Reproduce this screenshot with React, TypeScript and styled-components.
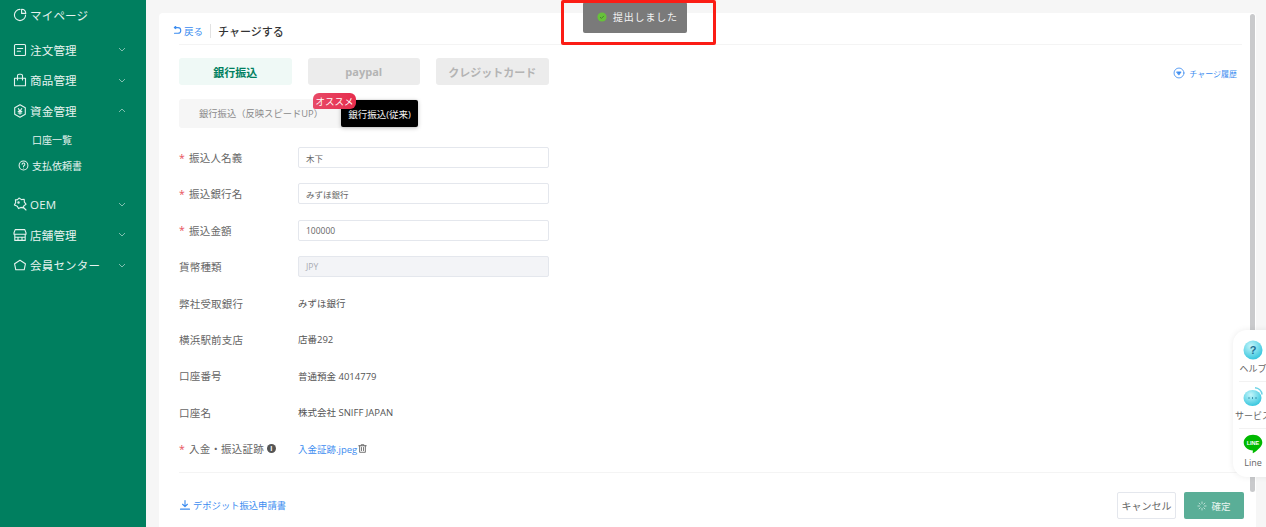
import { ReactNode } from 'react'
import styled, { createGlobalStyle } from 'styled-components'

const GREEN = '#007f5f'
const BLUE = '#3b8cf0'

const Global = createGlobalStyle`
    html, body {
        margin: 0;
        padding: 0;
        height: 527px;
        overflow: hidden;
        background: #f6f6f6;
        font-family: "Open Sans", "Noto Sans CJK JP", sans-serif;
    }
    * { box-sizing: border-box; }
`

const Ico = ({ children, size = 16 }: { children: ReactNode; size?: number }) => (
    <svg width={size} height={size} viewBox="0 0 16 16" fill="none" stroke="currentColor" strokeWidth="1.1" strokeLinecap="round" strokeLinejoin="round">
        {children}
    </svg>
)

const Chevron = ({ up }: { up?: boolean }) => (
    <ChevronBox viewBox="0 0 8 5" fill="none" stroke="currentColor" strokeWidth="0.8">
        <path d={up ? 'M1 4l3-3 3 3' : 'M1 1l3 3 3-3'} />
    </ChevronBox>
)

const menuIcons: Record<string, ReactNode> = {
    mypage: <><path d="M8 2.400a5.600 5.600 0 1 0 5.600 5.600" /><path d="M9.600 2.200v4.200h4.200a4.400 4.400 0 0 0-4.200-4.200z" /></>,
    order: <><rect x="2.500" y="2.500" width="11" height="11" rx="1" /><path d="M5.300 6.500h5.400M5.300 9.300h3.200" /></>,
    goods: <><path d="M2.500 6.200h11v7.600h-11z" /><path d="M5.500 8V3.800a1.600 1.600 0 0 1 1.600-1.600h1.800a1.600 1.600 0 0 1 1.600 1.600V8" /></>,
    funds: <><path d="M8 1.800l5.300 3v6.400L8 14.200l-5.300-3V4.800z" /><path d="M6.300 5.600L8 8l1.700-2.400M6.200 8.400h3.600M6.200 10h3.600M8 8v3.200" /></>,
    oem: <><path d="M7 2l2.500 1.600 2.700-.3.200 2.900 1.600 2-2.200 1.700-.4 2-2.600-.5-2.300 1.200-1.200-2.400L2.400 9l1.300-2.400-.3-2.700 2.200-.3z" /><path d="M11 11l3 3" /><circle cx="6.500" cy="6.500" r="0.700" /></>,
    store: <><path d="M3.200 2.600h9.600l1.200 3.200v1.400H2V5.800z" /><path d="M2.800 7.200v6.200h10.400V7.200M2.800 10.200h10.400M6 10.200v3.200M10 10.200v3.200" /></>,
    member: <path d="M2.600 6.800L8 3.200l5.400 3.600-1.200 6H3.800z" />,
}

const MenuRow = ({ icon, label, open, noArrow }: { icon: string; label: string; open?: boolean; noArrow?: boolean }) => (
    <MenuItem>
        <Ico>{menuIcons[icon]}</Ico>
        <MenuLabel>{label}</MenuLabel>
        {!noArrow && <Chevron up={open} />}
    </MenuItem>
)

const fields = [
    { label: '振込人名義', required: true, value: '木下' },
    { label: '振込銀行名', required: true, value: 'みずほ銀行' },
    { label: '振込金額', required: true, value: '100000' },
]

const infos = [
    { label: '弊社受取銀行', value: 'みずほ銀行' },
    { label: '横浜駅前支店', value: '店番292' },
    { label: '口座番号', value: '普通預金 4014779' },
    { label: '口座名', value: '株式会社 SNIFF JAPAN' },
]

const App = () => {
    return (
        <Page>
            <Global />
            <Sidebar>
                <TopItem><MenuRow icon="mypage" label="マイページ" noArrow /></TopItem>
                <MenuRow icon="order" label="注文管理" />
                <MenuRow icon="goods" label="商品管理" />
                <MenuRow icon="funds" label="資金管理" open />
                <SubItem>口座一覧</SubItem>
                <SubItem $withIcon>
                    <Ico size={11}><circle cx="8" cy="8" r="6.400" strokeWidth="1.500" /><path d="M6 6.300a2 2 0 1 1 3 1.700c-.7.400-1 .8-1 1.500M8 11.500v.1" strokeWidth="1.500" /></Ico>
                    支払依頼書
                </SubItem>
                <Spacer />
                <MenuRow icon="oem" label="OEM" />
                <MenuRow icon="store" label="店舗管理" />
                <MenuRow icon="member" label="会員センター" />
            </Sidebar>
            <Main>
                <Card>
                    <Header>
                        <BackLink>
                            <Ico size={10}><path d="M4 2.500h5.500a4 4 0 0 1 0 9H4" strokeWidth="1.800" /><path d="M6 .8L3.800 2.500 6 4.300" strokeWidth="1.800" /></Ico>
                            戻る
                        </BackLink>
                        <HeaderTitle>チャージする</HeaderTitle>
                    </Header>
                    <TabsRow>
                        <PayTab $active>銀行振込</PayTab>
                        <PayTab>paypal</PayTab>
                        <PayTab>クレジットカード</PayTab>
                        <History>
                            <Ico size={12}><circle cx="8" cy="8" r="6.600" /><path d="M5.200 6.600h5.600L8 10.400z" fill="currentColor" /></Ico>
                            チャージ履歴
                        </History>
                    </TabsRow>
                    <SubTabs>
                        <SubTab>銀行振込（反映スピードUP）</SubTab>
                        <SubTabDark>銀行振込(従来)</SubTabDark>
                        <Badge>オススメ</Badge>
                    </SubTabs>
                    <Form>
                        {fields.map((f) => (
                            <Row key={f.label}>
                                <Label><Star>*</Star>{f.label}</Label>
                                <Input>{f.value}</Input>
                            </Row>
                        ))}
                        <Row>
                            <Label>貨幣種類</Label>
                            <Input $disabled>JPY</Input>
                        </Row>
                        {infos.map((f) => (
                            <Row key={f.label}>
                                <Label>{f.label}</Label>
                                <Value>{f.value}</Value>
                            </Row>
                        ))}
                        <Row>
                            <Label>
                                <Star>*</Star>入金・振込証跡
                                <InfoDot>i</InfoDot>
                            </Label>
                            <FileLink>入金証跡.jpeg</FileLink>
                            <TrashBox>
                                <Ico size={11}><path d="M2.500 4h11M6 4V2.500h4V4M3.800 4v9.500h8.400V4M6.500 6.500v4.500M9.500 6.500v4.500" strokeWidth="1.300" /></Ico>
                            </TrashBox>
                        </Row>
                    </Form>
                    <Footer>
                        <Download>
                            <Ico size={12}><path d="M8 2v8M4.800 7L8 10.200 11.200 7M2 13.500h12" strokeWidth="1.500" /></Ico>
                            デポジット振込申請書
                        </Download>
                        <FooterButtons>
                            <CancelButton>キャンセル</CancelButton>
                            <ConfirmButton>
                                <Ico size={10}><path d="M8 1.500v2.500M8 12v2.500M1.500 8H4M12 8h2.500M3.400 3.400l1.800 1.800M10.800 10.800l1.800 1.800M3.400 12.600l1.800-1.800M10.800 5.200l1.800-1.800" /></Ico>
                                確定
                            </ConfirmButton>
                        </FooterButtons>
                    </Footer>
                </Card>
                <Scrollbar />
            </Main>
            <Toast>
                <ToastCheck viewBox="0 0 12 12">
                    <circle cx="6" cy="6" r="5.500" fill="#67c23a" />
                    <path d="M3.600 6.100l1.700 1.600 3-3" fill="none" stroke="#3d7a2a" strokeWidth="1" />
                </ToastCheck>
                提出しました
            </Toast>
            <Highlight />
            <Floating>
                <FloatItem>
                    <svg width="20" height="20" viewBox="0 0 20 20">
                        <defs>
                            <radialGradient id="bubble" cx="40%" cy="30%" r="75%">
                                <stop offset="0" stopColor="#c5f6fb" />
                                <stop offset="1" stopColor="#2fc3dc" />
                            </radialGradient>
                        </defs>
                        <circle cx="10" cy="10" r="9.500" fill="url(#bubble)" />
                        <text x="10" y="14" textAnchor="middle" fontSize="11" fontWeight="700" fill="#1f6f92" fontFamily="Liberation Sans">?</text>
                    </svg>
                    <FloatLabel>ヘルプ</FloatLabel>
                </FloatItem>
                <FloatItem>
                    <svg width="20" height="20" viewBox="0 0 20 20">
                        <path d="M12 .8a7.500 7.500 0 0 1 7 6.700" fill="none" stroke="#6fd4e6" strokeWidth="1.600" />
                        <ellipse cx="9.500" cy="11" rx="9" ry="8" fill="url(#bubble)" />
                        <path d="M5.500 11h1M9 11h1M12.500 11h1" stroke="#1f7f9f" strokeWidth="1.500" />
                    </svg>
                    <FloatLabel>サービス</FloatLabel>
                </FloatItem>
                <FloatItem $last>
                    <svg width="20" height="20" viewBox="0 0 20 20">
                        <path d="M10 .8c5.200 0 9.300 3.400 9.300 7.700 0 3.700-4.400 7.500-9 10.600-.3.200-.7 0-.6-.4l.2-2.200C4.700 16.200.7 12.800.7 8.500.7 4.200 4.800.8 10 .8z" fill="#00b900" />
                        <text x="10" y="11" textAnchor="middle" fontSize="5.500" fontWeight="700" fill="#fff" fontFamily="Liberation Sans">LINE</text>
                    </svg>
                    <FloatLabel>Line</FloatLabel>
                </FloatItem>
            </Floating>
        </Page>
    )
}

const Page = styled.div`
    position: relative;
    display: flex;
    width: 1266px;
    height: 527px;
    overflow: hidden;
`
const Sidebar = styled.aside`
    flex: 0 0 146px;
    display: flex;
    flex-direction: column;
    background: ${GREEN};
    color: #e6f3ef;
    padding-left: 12px;
`
const TopItem = styled.div`
    margin-bottom: 4px;
`
const MenuItem = styled.div`
    display: flex;
    align-items: center;
    gap: 2px;
    height: 30.500px;
    padding-right: 20px;
`
const MenuLabel = styled.span`
    flex: 1;
    font-size: 11.500px;
    letter-spacing: 0.2px;
`
const ChevronBox = styled.svg`
    width: 8px;
    height: 5px;
    opacity: 0.7;
`
const SubItem = styled.div<{ $withIcon?: boolean }>`
    display: flex;
    align-items: center;
    gap: 3px;
    height: 26px;
    padding-left: ${(p) => (p.$withIcon ? '6px' : '20px')};
    font-size: 10px;
`
const Spacer = styled.div`
    height: 11px;
`
const Main = styled.main`
    position: relative;
    flex: 1;
    padding: 13px 10px 0 13px;
`
const Card = styled.section`
    height: 530px;
    background: #fff;
    border-radius: 4px;
    padding: 0 19px 0 20px;
`
const Header = styled.header`
    display: flex;
    align-items: center;
    height: 32px;
    padding-top: 4px;
    margin-right: -5px;
    border-bottom: 1px solid #f4f4f4;
`
const BackLink = styled.span`
    display: flex;
    align-items: center;
    gap: 2px;
    padding-right: 7px;
    margin-left: -7px;
    font-size: 9.500px;
    color: ${BLUE};
    border-right: 1px solid #e2e2e2;
    height: 14px;
`
const HeaderTitle = styled.span`
    margin-left: 7px;
    font-size: 11px;
    font-weight: 500;
    color: #333;
`
const TabsRow = styled.div`
    position: relative;
    display: flex;
    gap: 16px;
    margin-top: 13px;
`
const PayTab = styled.div<{ $active?: boolean }>`
    display: flex;
    align-items: center;
    justify-content: center;
    width: 112.500px;
    height: 27px;
    border-radius: 3px;
    font-size: 11px;
    font-weight: 700;
    background: ${(p) => (p.$active ? '#eff9f6' : '#ececec')};
    color: ${(p) => (p.$active ? GREEN : '#b4b4b4')};
`
const History = styled.span`
    position: absolute;
    right: 0;
    top: 9px;
    display: flex;
    align-items: center;
    gap: 4px;
    font-size: 8px;
    color: ${BLUE};
`
const SubTabs = styled.div`
    position: relative;
    display: flex;
    align-items: center;
    width: 239px;
    height: 29px;
    margin-top: 14px;
    border-radius: 3px;
    background: #f6f6f6;
`
const SubTab = styled.span`
    padding-left: 20px;
    width: 162px;
    margin-top: -2px;
    font-size: 9.300px;
    color: #8a8a8a;
    white-space: nowrap;
`
const SubTabDark = styled.span`
    display: flex;
    align-items: center;
    justify-content: center;
    width: 77px;
    height: 27px;
    border-radius: 2px;
    background: #000;
    color: #f2f2f2;
    font-size: 9.500px;
    box-shadow: 0 1px 4px rgba(0, 0, 0, 0.25);
    white-space: nowrap;
`
const Badge = styled.span`
    position: absolute;
    left: 134px;
    top: -6px;
    display: flex;
    align-items: center;
    justify-content: center;
    width: 43px;
    height: 16px;
    border-radius: 6px 6px 6px 2px;
    background: linear-gradient(90deg, #e84a67, #e62d4d);
    color: #fff;
    font-size: 9.500px;
`
const Form = styled.div`
    display: flex;
    flex-direction: column;
    gap: 5.400px;
    margin-top: 14px;
    padding-bottom: 8px;
    margin-right: -5px;
    border-bottom: 1px solid #f4f4f4;
`
const Row = styled.div`
    display: flex;
    align-items: center;
    height: 31px;
`
const Label = styled.div`
    display: flex;
    align-items: center;
    flex: 0 0 119px;
    font-size: 10.500px;
    color: #666;
    letter-spacing: 0.2px;
`
const Star = styled.span`
    color: #e8505b;
    margin-right: 4px;
`
const InfoDot = styled.span`
    display: inline-flex;
    align-items: center;
    justify-content: center;
    width: 9px;
    height: 9px;
    margin-left: 3px;
    border-radius: 50%;
    background: #555;
    color: #fff;
    font-size: 7px;
    font-weight: 700;
`
const Input = styled.div<{ $disabled?: boolean }>`
    display: flex;
    align-items: center;
    width: 251px;
    height: 21px;
    padding-left: 7px;
    border: 1px solid #e4e7ed;
    border-radius: 2px;
    font-size: 8.500px;
    color: ${(p) => (p.$disabled ? '#a8abb2' : '#666')};
    background: ${(p) => (p.$disabled ? '#f3f4f7' : '#fff')};
`
const Value = styled.div`
    font-size: 9.500px;
    color: #555;
`
const FileLink = styled.span`
    font-size: 9.500px;
    color: ${BLUE};
`
const TrashBox = styled.span`
    display: flex;
    color: #666;
`
const Footer = styled.footer`
    display: flex;
    align-items: center;
    justify-content: space-between;
    margin-top: 19px;
    margin-right: -7px;
`
const Download = styled.span`
    display: flex;
    align-items: center;
    gap: 2px;
    margin-top: -2px;
    font-size: 9.300px;
    color: ${BLUE};
`
const FooterButtons = styled.div`
    display: flex;
    gap: 8px;
`
const CancelButton = styled.button`
    width: 59px;
    height: 27px;
    padding: 0;
    border: 1px solid #e4e7ed;
    border-radius: 2px;
    background: #fff;
    color: #666;
    font-family: inherit;
    font-size: 10px;
`
const ConfirmButton = styled.button`
    display: flex;
    align-items: center;
    justify-content: center;
    gap: 4px;
    width: 60px;
    height: 27px;
    padding: 0;
    border: none;
    border-radius: 2px;
    background: #5aae97;
    color: #e8f5f1;
    font-family: inherit;
    font-size: 9.500px;
`
const Scrollbar = styled.div`
    position: absolute;
    top: 14px;
    right: 11px;
    width: 5px;
    height: 478px;
    border-radius: 3px;
    background: #c9cacc;
`
const Toast = styled.div`
    position: absolute;
    top: 2px;
    left: 583px;
    display: flex;
    align-items: center;
    gap: 6px;
    width: 104px;
    height: 31px;
    padding: 0 0 2px 14px;
    border-radius: 2px;
    background: #7a7a7a;
    color: #f2f2f2;
    font-size: 10px;
    letter-spacing: 0.8px;
`
const ToastCheck = styled.svg`
    width: 10px;
    height: 10px;
`
const Highlight = styled.div`
    position: absolute;
    top: 0;
    left: 561px;
    width: 155px;
    height: 45px;
    border: 3px solid #fb1d15;
    border-radius: 2px;
    pointer-events: none;
`
const Floating = styled.aside`
    position: absolute;
    top: 330px;
    left: 1233px;
    width: 50px;
    height: 147px;
    padding-top: 5px;
    border-radius: 14px 0 0 14px;
    background: #fff;
    box-shadow: 0 0 6px rgba(0, 0, 0, 0.08);
`
const FloatItem = styled.div<{ $last?: boolean }>`
    position: relative;
    display: flex;
    flex-direction: column;
    align-items: center;
    width: 40px;
    height: 47px;
    padding-top: 5px;
    &::after {
        content: '';
        display: ${(p) => (p.$last ? 'none' : 'block')};
        position: absolute;
        left: 6px;
        right: -10px;
        bottom: 0;
        height: 1px;
        background: #f2f2f2;
    }
`
const FloatLabel = styled.span`
    margin-top: 2px;
    font-size: 9px;
    line-height: 13px;
    color: #666;
    white-space: nowrap;
`

export default App
